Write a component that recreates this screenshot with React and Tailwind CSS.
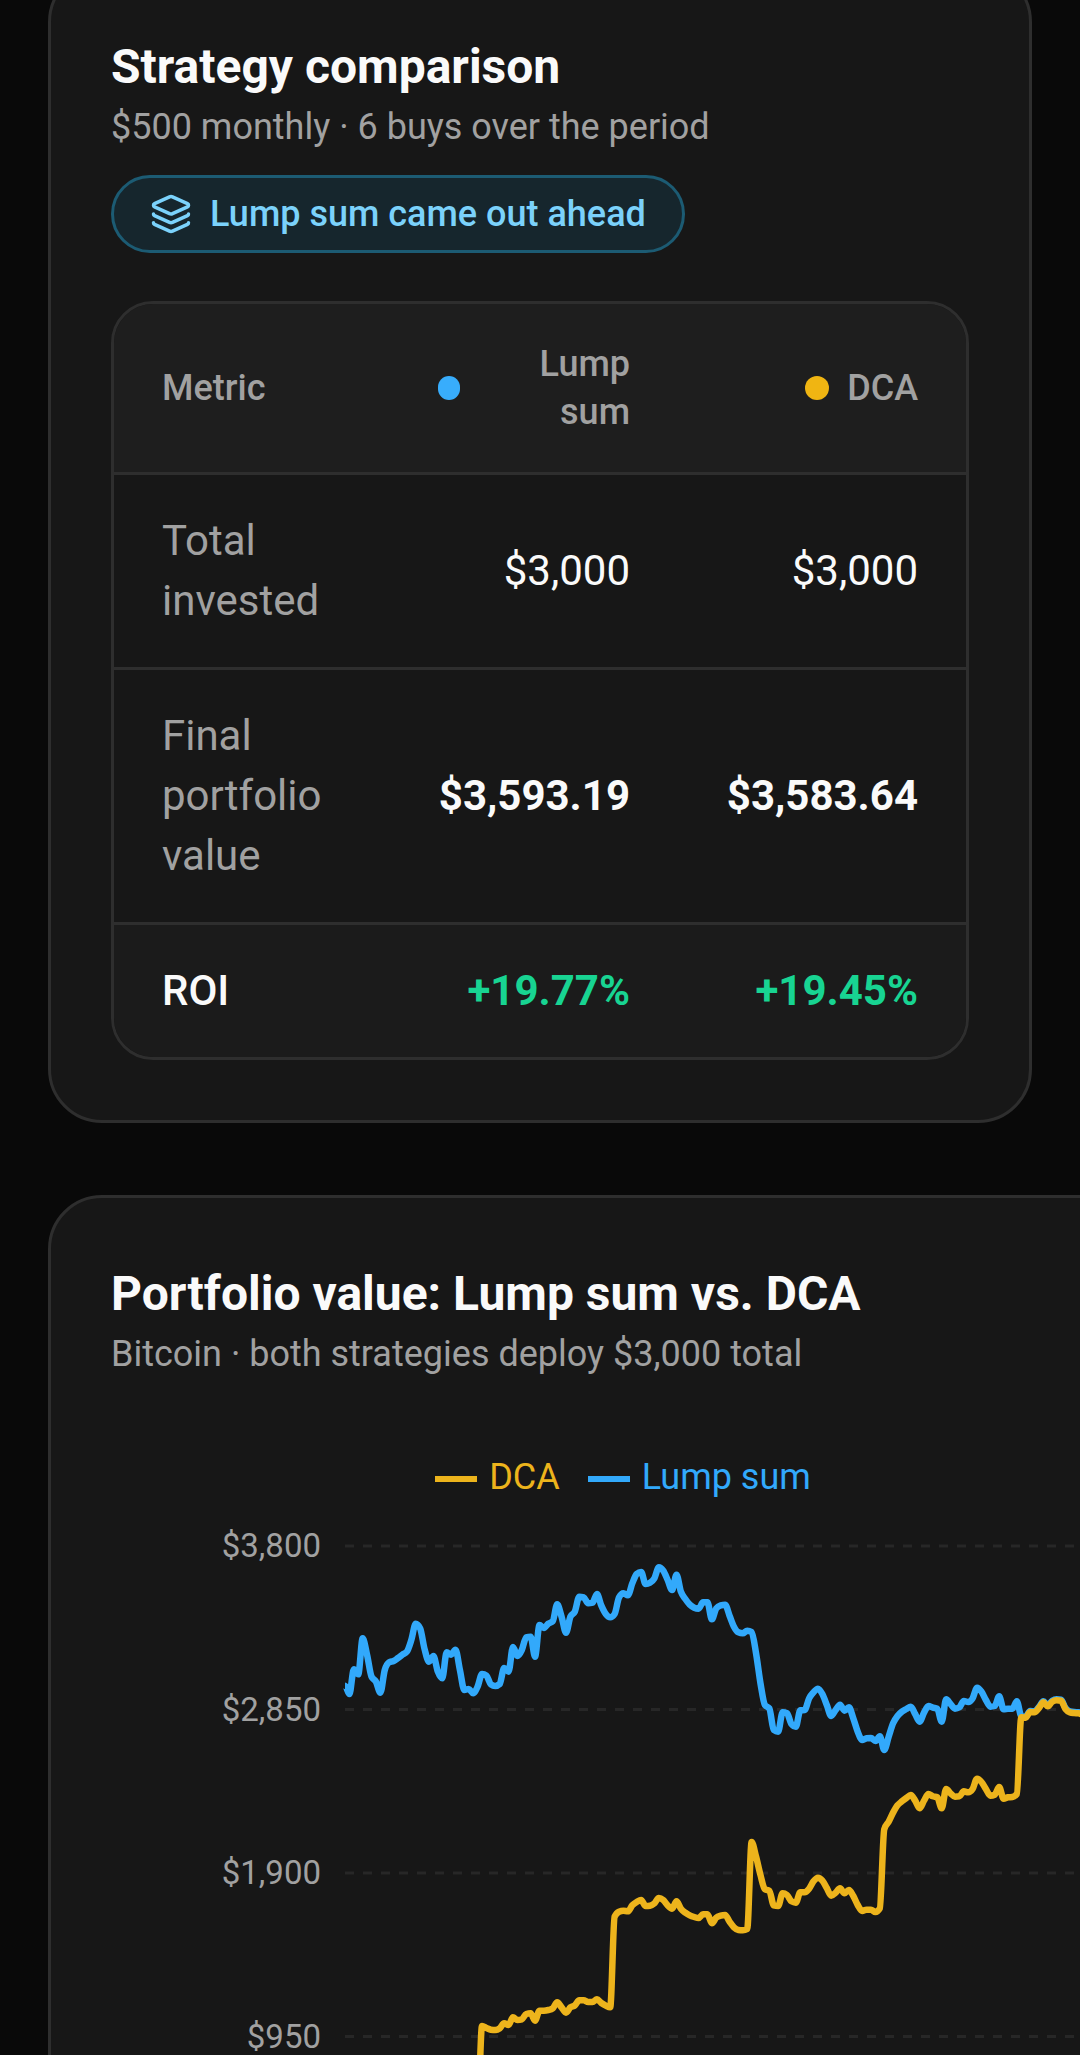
import React from "react";
import { Layers } from "lucide-react";

const BLUE = "#32a9fb";
const YELLOW = "#edb41c";

// one sample per day, three units to a pixel, measured down from the chart top
const lumpSum = [
  707, 732, 658, 673, 565, 615, 680, 695, 728, 660, 637, 633, 624, 614, 605, 570, 521, 535, 597, 635,
  618, 665, 685, 607, 614, 599, 660, 720, 717, 730, 710, 672, 677, 703, 708, 702, 654, 665, 591, 618,
  600, 562, 560, 620, 525, 534, 521, 514, 463, 500, 548, 500, 485, 440, 442, 460, 458, 432, 467, 492,
  502, 492, 442, 430, 436, 400, 372, 366, 402, 398, 385, 352, 362, 390, 420, 374, 425, 447, 464, 473,
  476, 457, 457, 508, 475, 466, 464, 497, 530, 547, 550, 542, 546, 610, 700, 765, 775, 840, 845, 787,
  790, 822, 830, 781, 780, 745, 727, 716, 732, 765, 798, 780, 764, 782, 772, 805, 845, 870, 865, 864,
  873, 859, 900, 860, 820, 798, 785, 777, 770, 792, 815, 788, 768, 773, 776, 815, 748, 762, 776, 772,
  753, 756, 745, 713, 725, 750, 770, 768, 739, 778, 776, 776, 754, 798, 800, 783, 784, 771, 754, 766,
  752, 748, 749, 774, 784, 786, 787, 791, 777,
];

const dca = [
  ...Array(31).fill(1993),
  1728, 1734, 1739, 1740, 1735, 1720, 1725, 1702, 1710, 1708, 1692, 1690, 1712, 1682, 1682, 1680, 1675,
  1657, 1672, 1688, 1672, 1666, 1651, 1651, 1656, 1656, 1648, 1659, 1667, 1672, 1400, 1385, 1382, 1384,
  1366, 1356, 1350, 1368, 1367, 1360, 1344, 1350, 1366, 1376, 1354, 1376, 1388, 1396, 1401, 1404, 1393,
  1393, 1420, 1403, 1397, 1395, 1415, 1432, 1440, 1441, 1437, 1176, 1220, 1275, 1318, 1322, 1366, 1368,
  1330, 1335, 1354, 1358, 1327, 1327, 1316, 1294, 1283, 1292, 1314, 1337, 1328, 1315, 1330, 1320, 1338,
  1365, 1383, 1379, 1379, 1386, 1375, 1138, 1115, 1088, 1066, 1054, 1044, 1035, 1052, 1075, 1052, 1032,
  1039, 1042, 1075, 1017, 1030, 1040, 1039, 1024, 1027, 1017, 986, 996, 1017, 1037, 1034, 1011, 1046,
  1042, 1041, 1032, 802, 803, 786, 787, 774, 757, 769, 755, 751, 752, 777, 787, 789, 790, 794, 780,
];

const PLOT_LEFT = 234;
const DAY = 4.42;

const ticks = [
  { label: "$3,800", y: 96 },
  { label: "$2,850", y: 259.5 },
  { label: "$1,900", y: 423 },
  { label: "$950", y: 586.5 },
];

// monotone cubic through the samples, so the line never overshoots a day
const linePath = (samples) => {
  const ys = samples.map((s) => s / 3);
  const slopes = ys.map((y, i) => {
    if (i === 0 || i === ys.length - 1) return 0;
    const a = (y - ys[i - 1]) / DAY;
    const b = (ys[i + 1] - y) / DAY;
    if (a * b <= 0) return 0;
    return Math.sign(a) * Math.min(Math.abs(a) * 2, Math.abs(b) * 2, Math.abs(a + b) / 2);
  });
  let d = `M${PLOT_LEFT},${ys[0]}`;
  for (let i = 1; i < ys.length; i++) {
    const x0 = PLOT_LEFT + (i - 1) * DAY;
    const x1 = x0 + DAY;
    const t = DAY / 3;
    d += `C${x0 + t},${ys[i - 1] + slopes[i - 1] * t} ${x1 - t},${ys[i] - slopes[i] * t} ${x1},${ys[i]}`;
  }
  return d;
};

const rows = [
  { label: "Total invested", lump: "$3,000", dca: "$3,000", row: "border-b-3", head: "font-normal text-[#a1a1a1]", cell: "font-normal" },
  { label: "Final portfolio value", lump: "$3,593.19", dca: "$3,583.64", row: "border-b-3", head: "font-normal text-[#a1a1a1]", cell: "font-bold" },
  { label: "ROI", lump: "+19.77%", dca: "+19.45%", row: "bg-[#1b1b1b]", head: "font-medium", cell: "font-bold text-[#18d492]" },
];

const CardHeader = ({ title, subtitle }) => (
  <header>
    <h2 className="text-[48px] leading-[72px] font-bold">{title}</h2>
    <p className="text-[36px] leading-[48px] text-[#a1a1a1]">{subtitle}</p>
  </header>
);

const SeriesHead = ({ color, label }) => (
  <th scope="col" className="px-12 py-9 font-medium">
    <div className="flex items-center justify-end gap-[18px] text-right">
      <span className={`size-6 rounded-full ${color}`} />
      <span>{label}</span>
    </div>
  </th>
);

const LegendItem = ({ color, label }) => (
  <li className="flex items-center gap-3 pr-7" style={{ color }}>
    <svg width="42" height="42" viewBox="0 0 42 42" aria-hidden="true">
      <path d="M0 23H42" stroke={color} strokeWidth="6" />
    </svg>
    {label}
  </li>
);

const ComparisonCard = () => (
  <section className="-mt-8 rounded-[54px] border-3 border-[#2e2e2e] bg-[#171717] p-[60px]">
    <CardHeader title="Strategy comparison" subtitle="$500 monthly · 6 buys over the period" />

    <div className="mt-6 inline-flex items-center gap-[18px] rounded-full border-3 border-[#1c5b73] bg-[#16262d] px-9 py-3 text-[36px] leading-[48px] font-medium text-[#7bd2fb]">
      <Layers size={42} />
      Lump sum came out ahead
    </div>

    <div className="mt-12 overflow-hidden rounded-[42px] border-3 border-[#2e2e2e]">
      <table className="w-full table-fixed border-collapse">
        <thead>
          <tr className="border-b-3 border-[#2e2e2e] bg-[#1e1e1e] text-[36px] leading-[48px] text-[#a1a1a1]">
            <th scope="col" className="w-[276px] px-12 py-9 text-left font-medium">
              Metric
            </th>
            <SeriesHead color="bg-[#38adfc]" label="Lump sum" />
            <SeriesHead color="bg-[#f0b512]" label="DCA" />
          </tr>
        </thead>
        <tbody className="text-[42px] leading-[60px]">
          {rows.map((r) => (
            <tr key={r.label} className={`border-[#2e2e2e] ${r.row}`}>
              <th scope="row" className={`px-12 py-9 text-left ${r.head}`}>
                {r.label}
              </th>
              <td className={`px-12 py-9 text-right ${r.cell}`}>{r.lump}</td>
              <td className={`px-12 py-9 text-right ${r.cell}`}>{r.dca}</td>
            </tr>
          ))}
        </tbody>
      </table>
    </div>
  </section>
);

const ChartCard = () => (
  <section className="w-max min-w-full rounded-[54px] border-3 border-[#2e2e2e] bg-[#171717] p-[60px]">
    <CardHeader title="Portfolio value: Lump sum vs. DCA" subtitle="Bitcoin · both strategies deploy $3,000 total" />

    <ul className="mt-[72px] flex justify-center text-[36px] leading-[54px]">
      <LegendItem color={YELLOW} label="DCA" />
      <LegendItem color={BLUE} label="Lump sum" />
    </ul>

    <svg width="1052" height="726" viewBox="0 54 1052 726" role="img" aria-label="Portfolio value over time">
      {ticks.map((t) => (
        <g key={t.label}>
          <path d={`M${PLOT_LEFT} ${t.y}H1052`} stroke="#272727" strokeWidth="3" strokeDasharray="9 9" />
          <text x="210" y={t.y + 11} textAnchor="end" fontSize="33" fill="#a1a1a1">
            {t.label}
          </text>
        </g>
      ))}
      <path d={linePath(lumpSum)} fill="none" stroke={BLUE} strokeWidth="6.5" strokeLinejoin="round" />
      <path d={linePath(dca)} fill="none" stroke={YELLOW} strokeWidth="6.5" strokeLinejoin="round" />
    </svg>
  </section>
);

export default function App() {
  return (
    <main className="flex h-screen flex-col gap-[72px] overflow-hidden bg-[#090909] px-12 font-['Roboto',sans-serif] text-[#fafafa]">
      <ComparisonCard />
      <ChartCard />
    </main>
  );
}
